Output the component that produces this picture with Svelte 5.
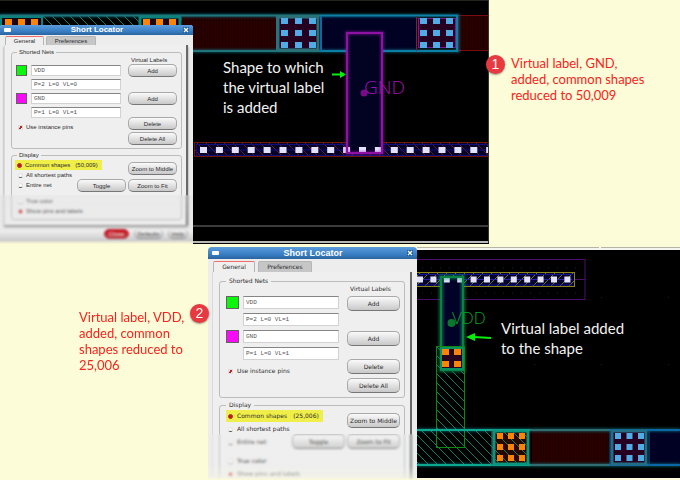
<script>
  const steps = [
    { id: 'gnd', size: 'small', vdd: 'P=2 L=0 VL=0', gnd: 'P=1 L=0 VL=1', count: '(50,009)' },
    { id: 'vdd', size: 'large', vdd: 'P=2 L=0 VL=1', gnd: 'P=1 L=0 VL=1', count: '(25,006)' }
  ];
  const range = (n) => Array.from({ length: n }, (_, i) => i);
</script>

{#snippet contact(x, y, dx, dy, color, cols = 3, rows = 3, w = 7, h = 6)}
  {#each range(cols) as c}
    {#each range(rows) as r}
      <rect x={x + c * dx} y={y + r * dy} width={w} height={h} fill={color} />
    {/each}
  {/each}
{/snippet}

{#snippet locator(s)}
  <section class="dialog {s.size}">
    <header>
      <i class="menu"></i>
      <h2>Short Locator</h2>
      <button class="close" aria-label="Close window">
        <svg viewBox="0 0 6 6"><path d="M1 1 5 5M5 1 1 5" stroke="#fff" stroke-width="1.3" /></svg>
      </button>
    </header>
    <nav>
      <button class="tab on">General</button>
      <button class="tab">Preferences</button>
    </nav>
    <div class="pane">
      <fieldset class="nets">
        <legend>Shorted Nets</legend>
        <div class="fields">
          <div class="net">
            <span class="swatch green"></span>
            <input aria-label="VDD net" value="VDD" />
            <input aria-label="VDD counts" value={s.vdd} />
          </div>
          <div class="net">
            <span class="swatch pink"></span>
            <input aria-label="GND net" value="GND" />
            <input aria-label="GND counts" value={s.gnd} />
          </div>
          <label class="opt pins"><input type="checkbox" checked /><span>Use instance pins</span></label>
        </div>
        <div class="actions">
          <span class="caption">Virtual Labels</span>
          <button class="btn">Add</button>
          <button class="btn second">Add</button>
          <button class="btn delete">Delete</button>
          <button class="btn all">Delete All</button>
        </div>
      </fieldset>
      <fieldset class="display">
        <legend>Display</legend>
        <div class="options">
          <label class="opt lit"><input type="radio" name={s.id} checked /><span>Common shapes</span><span class="count">{s.count}</span></label>
          <label class="opt"><input type="radio" name={s.id} /><span>All shortest paths</span></label>
          <label class="opt"><input type="radio" name={s.id} /><span>Entire net</span></label>
          <label class="opt apart"><input type="checkbox" /><span>True color</span></label>
          <label class="opt"><input type="checkbox" checked /><span>Show pins and labels</span></label>
        </div>
        <div class="zooms">
          <button class="btn middle">Zoom to Middle</button>
          <button class="btn">Toggle</button>
          <button class="btn">Zoom to Fit</button>
        </div>
      </fieldset>
    </div>
    {#if s.size === 'small'}
      <footer>
        <button class="btn red">Close</button>
        <button class="btn">Defaults</button>
        <button class="btn help">Help</button>
      </footer>
    {/if}
    <div class="veil"></div>
  </section>
{/snippet}

<main>
  <section class="scene first">
    <div class="canvas">
      <svg viewBox="0 0 489 244" preserveAspectRatio="none">
        <defs>
          <pattern id="hatch" width="9" height="9" patternUnits="userSpaceOnUse">
            <path d="M0 0 9 9M-1 8 1 10M8 -1 10 1" stroke="#078069" stroke-width="1" />
          </pattern>
          <pattern id="hatchRed" width="9" height="9" patternUnits="userSpaceOnUse">
            <path d="M0 0 9 9M-1 8 1 10M8 -1 10 1" stroke="#6c1719" stroke-width="1" />
          </pattern>
          <pattern id="weave" width="3" height="3" patternUnits="userSpaceOnUse">
            <rect width="3" height="3" fill="#280000" /><path d="M0 0V3" stroke="#1a0000" />
          </pattern>
          <filter id="glow" x="-20%" y="-20%" width="140%" height="140%"><feGaussianBlur stdDeviation="1.2" /></filter>
        </defs>
        <rect width="489" height="244" fill="#000" />
        <rect width="489" height="1" fill="#24241f" />
        <rect x="0" y="15" width="182" height="36" fill="url(#hatch)" />
        <rect x="182" y="16" width="94" height="35" fill="url(#weave)" />
        <rect x="320" y="16" width="100" height="35" fill="#010123" />
        <rect x="458" y="15.500" width="34" height="35" fill="url(#weave)" stroke="#7a0c10" />
        <rect x="278" y="17" width="40" height="32" fill="#260020" />
        <rect x="418.500" y="18.500" width="37" height="29" fill="#260020" stroke="#8b0e92" />
        <path d="M0 15.500H458V51H0" fill="none" stroke="#0a7f93" stroke-width="4" opacity=".5" filter="url(#glow)" />
        <path d="M0 15.500H320M0 51H320" stroke="#20747b" stroke-width="2" />
        <path d="M320 15.500H457V51H320M277 16V50" fill="none" stroke="#0b7fa8" stroke-width="2" />
        <rect x="278" y="17" width="40" height="33" fill="none" stroke="#2b7077" stroke-width="3" />
        <rect x="1" y="17" width="41" height="33" fill="#1a0510" stroke="#0b837c" stroke-width="2" />
        <rect x="140" y="17" width="40" height="33" fill="#1a0510" stroke="#0b837c" stroke-width="3" />
        <path d="M416.500 16V51" stroke="#812024" />
        <path d="M321 16V51" stroke="#0b67a5" stroke-width="2" />
        {@render contact(5, 19, 13, 12, '#f98508')}
        {@render contact(143, 19, 13, 12, '#f98508')}
        {@render contact(281, 18, 14, 12, '#51ace6')}
        {@render contact(420, 18, 13, 12, '#51ace6')}
        <rect x="194.500" y="142.500" width="300" height="14" fill="#03032c" stroke="#711505" />
        <rect x="195" y="143" width="294" height="13" fill="url(#hatchRed)" />
        <path d="M196 144.500H489M196 150H489M196 155.500H489M196.500 144V156" stroke="#10107c" />
        <rect x="347.500" y="33.500" width="34" height="119" fill="#020222" />
        {#each range(19) as i}
          <rect x={200 + i * 15.900} y="147" width="7" height="6" fill="#e3e2ff" />
        {/each}
        <rect x="347" y="33" width="35" height="120" fill="none" stroke="#a415bd" stroke-width="4" opacity=".45" filter="url(#glow)" />
        <rect x="347" y="33" width="35" height="120" fill="none" stroke="#8f12a4" stroke-width="2" />
        <circle cx="364" cy="93" r="3.500" fill="#790b87" />
        <text class="net-name" x="364" y="94" font-size="19" fill="#a010b4">GND</text>
        <path d="M332 74.500H342" stroke="#05ef0c" stroke-width="2" />
        <path d="M340 71 346 74.500 340 78Z" fill="#05ef0c" />
        <path d="M190 226H489" stroke="#77777a" />
        <path d="M190 242H489" stroke="#b7b7b5" stroke-width="2" />
        <path d="M488.500 0V243" stroke="#34342f" />
      </svg>
      <p class="callout one">Shape to which<br />the virtual label<br />is added</p>
      {@render locator(steps[0])}
    </div>
    <div class="note">
      <span class="badge">1</span>
      <p>Virtual label, GND,<br />added, common shapes<br />reduced to 50,009</p>
    </div>
  </section>

  <section class="scene second">
    <div class="note">
      <p>Virtual label, VDD,<br />added, common<br />shapes reduced to<br />25,006</p>
      <span class="badge">2</span>
    </div>
    {@render locator(steps[1])}
    <div class="canvas">
      <svg viewBox="417 246 263 234" preserveAspectRatio="none">
        <defs>
          <pattern id="hatchGold" width="9" height="9" patternUnits="userSpaceOnUse">
            <path d="M0 9 9 0M-1 1 1 -1M8 10 10 8" stroke="#74741a" stroke-width="1" />
          </pattern>
        </defs>
        <path d="M417 247.500H599M601 247.500H680" stroke="#b5b5a9" />
        <path d="M417 249H680" stroke="#f5f5ef" stroke-width="2" />
        <rect x="417" y="250" width="263" height="228" fill="#000" />
        <rect x="410" y="259.500" width="175" height="40" fill="none" stroke="#4d0e6c" />
        <path d="M422 268H580M422 293H580" stroke="#34104b" stroke-dasharray="1 8" />
        <rect x="410" y="272.500" width="164.500" height="14" fill="#040433" />
        <rect x="410" y="272.500" width="164.500" height="14" fill="url(#hatchGold)" stroke="#8a8316" />
        <path d="M417 274.500H572M417 285H572" stroke="#11118a" />
        <path d="M417 279.500H572" stroke="#2424a0" />
        <path d="M575 279.500H585" stroke="#4d0e6c" />
        <rect x="441" y="277" width="22" height="70" fill="#020228" />
        {#each range(12) as i}
          <rect x={417 + i * 13.400} y="276.500" width="6" height="6" fill="#e3e2ff" />
        {/each}
        <rect x="441" y="277" width="22" height="93" fill="none" stroke="#09a45c" stroke-width="5" opacity=".5" filter="url(#glow)" />
        <rect x="441" y="277" width="22" height="93" fill="none" stroke="#078443" stroke-width="2" />
        <rect x="417" y="430" width="112" height="35" fill="url(#hatch)" />
        <rect x="436.500" y="346.500" width="28" height="101" fill="url(#hatch)" stroke="#108512" />
        <rect x="441" y="348" width="22" height="21" fill="#25041e" stroke="#079060" stroke-width="2" />
        {@render contact(442, 349, 12, 12, '#f98508', 2, 2)}
        <circle cx="451.500" cy="323" r="4" fill="#07782c" />
        <text class="net-name" x="452" y="324" font-size="17" fill="#08a524">VDD</text>
        <rect x="532" y="431" width="77" height="33" fill="url(#weave)" />
        <rect x="650" y="431" width="30" height="33" fill="#010123" />
        <path d="M417 430H680M417 465H680" stroke="#0c99a0" stroke-width="4" opacity=".45" filter="url(#glow)" />
        <path d="M417 430H530M417 465H530" stroke="#0aa88f" stroke-width="2" />
        <path d="M530 430H612M530 465H612" stroke="#316d71" stroke-width="2" />
        <path d="M610 430H680M610 465H680" stroke="#0b67a5" stroke-width="2" />
        <rect x="494" y="431" width="34" height="33" fill="#290601" stroke="#0a957f" stroke-width="3" />
        <rect x="494" y="431" width="34" height="33" fill="url(#hatch)" />
        <rect x="612" y="431" width="34" height="33" fill="#260020" stroke="#226d84" stroke-width="3" />
        <path d="M610 430V466M649 430V466" stroke="#0863a6" />
        <path d="M492 430V466" stroke="#496b74" />
        {@render contact(497, 433, 11, 11, '#f98508', 3, 3, 6)}
        {@render contact(615, 433, 11.500, 11, '#51ace6', 3, 3, 6)}
        <path d="M491 338 474 337" stroke="#05ef0c" stroke-width="2" />
        <path d="M475 333 466 337 475 341Z" fill="#05ef0c" />
        {@render contact(467, 297, 67, 67, '#20201d', 4, 2, 1, 1)}
        <rect x="417" y="478" width="263" height="2" fill="#fcfcd8" />
      </svg>
      <p class="callout two">Virtual label added<br />to the shape</p>
    </div>
  </section>
</main>

<style>
  :global(body) { background: #fcfcd8; }
  * { box-sizing: border-box; }
  main {
    display: grid;
    grid-template-rows: auto 1fr;
    height: 100vh;
    min-height: 480px;
    overflow: hidden;
    background: #fcfcd8;
    font-family: "Liberation Sans", Arial, sans-serif;
  }
  p, h2 { margin: 0; }
  .scene { display: grid; min-height: 0; }
  .first { grid-template-columns: 489fr 191fr; }
  .second { grid-template-columns: 208px 209px 1fr; overflow: hidden; }
  .canvas { position: relative; min-width: 0; }
  .canvas > svg { display: block; width: 100%; height: 234px; }
  .first .canvas > svg { height: 244px; }
  .first .canvas { height: 246px; }
  .net-name { font-family: "Open Sans", "Noto Sans", sans-serif; font-weight: 300; }
  .callout {
    position: absolute;
    color: #f2f2f2;
    font: 15px/20px Lato, "Open Sans", sans-serif;
    white-space: nowrap;
  }
  .one { left: 223px; top: 57px; }
  .two { left: 84px; top: 72px; }
  .note {
    display: flex;
    align-items: flex-start;
    color: #f8231c;
    font: 13px/16px Lato, "Open Sans", sans-serif;
    white-space: nowrap;
  }
  .first .note { padding-top: 55px; gap: 6px; margin-left: -3px; z-index: 1; }
  .second .note { padding: 63px 0 0 79px; justify-content: space-between; z-index: 1; }
  .second .badge { margin: -5px -1px 0 0; }
  .badge {
    width: 19px;
    height: 19px;
    border-radius: 50%;
    background: #e7393f;
    box-shadow: 0 1px 2px #5559;
    color: #fff;
    font: 14px/19px "Liberation Sans", sans-serif;
    text-align: center;
  }

  .dialog {
    --font: 6px/8px "Liberation Sans", sans-serif;
    --title: 10px;
    --tab: 9px;
    --field: 11px;
    --gap: 3px;
    --btn: 13px;
    --btn-w: 49px;
    --row: 10px;
    position: relative;
    overflow: hidden;
    background: #ededed;
    color: #2c2c2c;
    font: var(--font);
    white-space: nowrap;
  }
  .small { position: absolute; left: 0; top: 25px; width: 193px; height: 219px; border-radius: 3px 3px 0 0; }
  .large {
    --font: 6px/8px "DejaVu Sans", sans-serif;
    --title: 12px;
    --tab: 11px;
    --field: 13px;
    --gap: 4px;
    --btn: 15px;
    --btn-w: 53px;
    --row: 12px;
    margin-top: 1px;
    border-radius: 4px 4px 0 0;
  }
  button, input { margin: 0; padding: 0; border: 0; font: inherit; color: inherit; }
  header {
    display: flex;
    align-items: center;
    justify-content: space-between;
    height: var(--title);
    padding: 0 4px;
    background: linear-gradient(#5b9cdb, #3a7fc5 60%, #28639f);
    color: #fff;
  }
  h2 { font: bold 8px/10px "Liberation Sans", sans-serif; }
  .large h2 { font-size: 9px; }
  .menu { width: 7px; height: 4px; border-radius: 1px; background: #fff; }
  .close { width: 6px; height: 6px; background: #1d5ea5; }
  .close svg { display: block; width: 6px; height: 6px; }
  nav { display: flex; gap: 2px; padding: 1px 0 0 5px; }
  .large nav { padding-top: 2px; gap: 3px; }
  .tab {
    width: 50px;
    height: var(--tab);
    border-radius: 2px 2px 0 0;
    background: #c6c6c6;
    border: 1px solid #b5b5b5;
    border-bottom: 0;
    text-align: center;
  }
  .tab.on { width: 39px; background: #efefef; border-top: 1px solid #f06c66; }
  .large .tab { width: 54px; }
  .large .tab.on { width: 42px; }
  .pane {
    margin: 0 5px 0 4px;
    padding: 3px 4px 5px 6px;
    border: solid #dadada;
    border-width: 0 0 0 1px;
    border-right: 2px solid #66686b;
    background: #efefef;
    box-shadow: 0 2px 2px #8a8a8a;
  }
  .large .pane { padding: 5px 5px 6px 6px; box-shadow: none; }
  fieldset {
    display: flex;
    min-width: 0;
    margin: 0;
    padding: 0 4px 3px;
    border: 1px solid #bcbcbc;
    border-radius: 3px;
  }
  .large fieldset { padding: 0 4px 4px 6px; }
  legend { height: 8px; margin-left: 1px; padding: 0 2px; }
  .large legend { padding: 0 3px; margin-left: 0; }
  .fields { flex: 1; display: flex; flex-direction: column; gap: var(--gap); padding-top: 9px; min-width: 0; }
  .large .fields { padding-top: 11px; }
  .net { display: grid; grid-template-columns: var(--field) 1fr; gap: var(--gap) 4px; }
  .net input {
    grid-column: 2;
    width: 100%;
    min-width: 0;
    height: var(--field);
    padding: 0 2px;
    border: 1px solid #d2d2d2;
    border-top-color: #858585;
    background: #fff;
    color: #555;
    font: 6px/8px "Liberation Mono", monospace;
  }
  .swatch { height: var(--field); border: 1px solid #626262; }
  .green { background: #0cf50c; }
  .pink { background: #f80cf8; }
  .actions { display: flex; flex-direction: column; width: var(--btn-w); margin-left: 7px; }
  .large .actions { margin-left: 8px; }
  .caption { height: 8px; padding-left: 3px; }
  .large .caption { margin-bottom: 3px; }
  .btn {
    width: var(--btn-w);
    height: var(--btn);
    border: 1px solid #a9a9a9;
    border-bottom-color: #777;
    border-radius: 5px;
    background: linear-gradient(#fafafa, #dfdfdf 55%, #c8c8c8);
    text-align: center;
  }
  .second.btn { margin-top: 15px; }
  .delete { margin-top: 12px; }
  .all { margin-top: 2px; }
  .large .second.btn { margin-top: 20px; }
  .large .delete { margin-top: 13px; }
  .large .all { margin-top: 4px; }
  .opt { display: flex; align-items: center; gap: 3px; height: var(--row); padding-left: 2px; }
  .large .opt { gap: 4px; }
  .opt input {
    appearance: none;
    width: 5px;
    height: 5px;
    border: 1px solid #e2e2e2;
    border-bottom-color: #555;
    border-radius: 50%;
    background: #fff;
  }
  .opt input[type='checkbox'] { border-radius: 0; border-bottom-color: #aaa; }
  .opt input:checked { background: #cf1313; border-color: #a33; }
  .opt input[type='checkbox']:checked {
    border-color: #ddd;
    background: linear-gradient(125deg, #fff 30%, #b22 31% 70%, #fff 71%);
  }
  .pins { margin-top: 1px; }
  .display { position: relative; margin-top: 2px; }
  .large .display { margin-top: 3px; }
  .options { flex: 1; display: flex; flex-direction: column; padding-top: 1px; }
  .large .options { gap: 1px; }
  .lit { width: 87px; margin-left: -1px; background: #f0ee48; }
  .large .lit { width: 97px; margin-left: 0; }
  .count { margin-left: 2px; }
  .apart { margin-top: 6px; }
  .apart ~ .opt input:checked { background: #d22; }
  .zooms {
    position: absolute;
    right: 4px;
    display: grid;
    grid-template-columns: var(--btn-w) var(--btn-w);
    gap: 4px 2px;
    padding-top: 3px;
  }
  .large .zooms { row-gap: 6px; padding-top: 4px; }
  .middle { grid-column: 2; }
  footer { display: flex; justify-content: flex-end; gap: 5px; padding: 4px 5px 3px; }
  footer .btn { width: 29px; height: 10px; border-top-color: #ddd; }
  footer .help { width: 20px; }
  footer .red { width: 25px; background: #c8000c; border-color: #b0000a; color: #fff; }
  .veil {
    position: absolute;
    inset: 170px 0 0;
    backdrop-filter: blur(1px);
    background: linear-gradient(#e0e0e055, #dcdcdc22 75%, #a8a8a877 92%, #fcfcd8);
  }
  .large .veil { inset: 187px 0 0; background: linear-gradient(#eeeeee33 70%, #f3f3e6aa 94%, #fcfcd8); }
</style>
